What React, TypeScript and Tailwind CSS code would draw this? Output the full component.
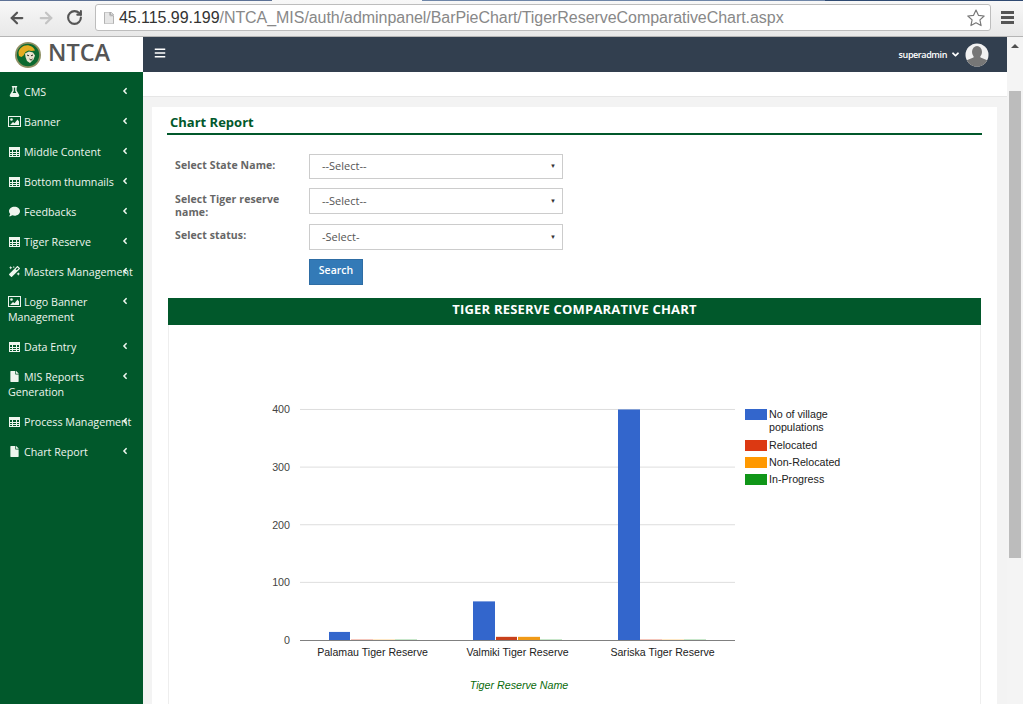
import { FaAngleDown, FaAngleLeft, FaBars, FaComment, FaFile, FaFlask, FaMagic } from 'react-icons/fa'
import { ArrowLeft, ArrowRight, RotateCw } from 'lucide-react'

function TableIcon({ className }: { className?: string }) {
  return (
    <svg className={className} width="11" height="10" viewBox="0 0 11 10">
      <rect x="0.5" y="0.5" width="10" height="9" fill="#01582b" stroke="#eef5ee" />
      <rect x="0" y="0" width="11" height="3" fill="#eef5ee" />
      <path d="M3.500 3v6M7.500 3v6M1 5.500h9M1 7.500h9" stroke="#eef5ee" strokeWidth="1" fill="none" />
    </svg>
  )
}

function ImageIcon({ className }: { className?: string }) {
  return (
    <svg className={className} width="13" height="11" viewBox="0 0 13 11">
      <rect x="0.5" y="0.5" width="12" height="10" fill="#01582b" stroke="#eef5ee" />
      <circle cx="3.500" cy="3.500" r="1.300" fill="#eef5ee" />
      <path d="M2 9l3-3 1.500 1.200L9.500 3.500 11 5.500V9z" fill="#eef5ee" />
    </svg>
  )
}

const menu = [
  { icon: FaFlask, label: 'CMS' },
  { icon: ImageIcon, label: 'Banner' },
  { icon: TableIcon, label: 'Middle Content' },
  { icon: TableIcon, label: 'Bottom thumnails' },
  { icon: FaComment, label: 'Feedbacks' },
  { icon: TableIcon, label: 'Tiger Reserve' },
  { icon: FaMagic, label: 'Masters Management' },
  { icon: ImageIcon, label: 'Logo Banner Management', wrap: true },
  { icon: TableIcon, label: 'Data Entry' },
  { icon: FaFile, label: 'MIS Reports Generation', wrap: true },
  { icon: TableIcon, label: 'Process Management' },
  { icon: FaFile, label: 'Chart Report' },
]

const filters = [
  { label: 'Select State Name:', value: '--Select--', row: 'h-[34px]', box: 'h-[25px]' },
  { label: 'Select Tiger reserve name:', value: '--Select--', row: 'h-[36px]', box: 'h-[26px]' },
  { label: 'Select status:', value: '-Select-', row: 'h-[35px]', box: 'h-[26px]' },
]

const bars = [
  { x: 329, w: 21, v: 14, c: '#3366cc' },
  { x: 351, w: 22, v: 0.5, c: '#dc3912' },
  { x: 373, w: 22, v: 0.4, c: '#ff9900' },
  { x: 395, w: 22, v: 0.4, c: '#109618' },
  { x: 473, w: 22, v: 67, c: '#3366cc' },
  { x: 496, w: 21, v: 5.5, c: '#c8401c' },
  { x: 518, w: 22, v: 5.5, c: '#f09a17' },
  { x: 540, w: 22, v: 0.4, c: '#109618' },
  { x: 618, w: 22, v: 400, c: '#3366cc' },
  { x: 640, w: 22, v: 0.5, c: '#dc3912' },
  { x: 662, w: 22, v: 0.4, c: '#ff9900' },
  { x: 684, w: 22, v: 0.4, c: '#109618' },
]

function Chart() {
  // svg coordinates follow the page, the panel starts at 169,325
  return (
    <svg width="811" height="380" viewBox="169 325 811 380" className="block" style={{ fontFamily: '"Liberation Sans", Arial, sans-serif' }}>
      {[0, 100, 200, 300, 400].map((t) => {
        const y = 640 - t * 0.5763
        return (
          <g key={t}>
            {t > 0 && <line x1="300" x2="735" y1={y} y2={y} stroke="#dedede" />}
            <text x="290" y={y + 4} textAnchor="end" fontSize="10.7" fill="#444">{t}</text>
          </g>
        )
      })}
      {bars.map((b) => (
        <rect key={b.x} x={b.x} y={640 - b.v * 0.5763} width={b.w} height={b.v * 0.5763} fill={b.c} />
      ))}
      <line x1="300" x2="735" y1="640.5" y2="640.5" stroke="#808080" />
      <g fontSize="10.6" fill="#222" textAnchor="middle">
        <text x="372.5" y="656">Palamau Tiger Reserve</text>
        <text x="517.5" y="656">Valmiki Tiger Reserve</text>
        <text x="662.5" y="656">Sariska Tiger Reserve</text>
      </g>
      <text x="519" y="689" textAnchor="middle" fontSize="10.7" fontStyle="italic" fill="#0a6b0a">Tiger Reserve Name</text>
      <rect x="745" y="409" width="22" height="11" fill="#3366cc" />
      <rect x="745" y="440" width="22" height="11" fill="#dc3912" />
      <rect x="745" y="457" width="22" height="11" fill="#ff9900" />
      <rect x="745" y="474" width="22" height="11" fill="#109618" />
      <g fontSize="10.7" fill="#222">
        <text x="769" y="418">No of village</text>
        <text x="769" y="431">populations</text>
        <text x="769" y="449">Relocated</text>
        <text x="769" y="466">Non-Relocated</text>
        <text x="769" y="483">In-Progress</text>
      </g>
    </svg>
  )
}

export default function App() {
  return (
    <div className="h-[704px] w-[1023px] overflow-hidden bg-white font-['Open_Sans',sans-serif]">
      {/* Browser toolbar */}
      <div className="flex h-[37px] flex-col border-b border-[#b5b5b5] bg-gradient-to-b from-[#f8f8f8] to-[#e8e8e8]">
        <div className="flex h-[1px] shrink-0">
          <span className="w-[272px] bg-[#5d7296]" />
          <span className="w-[150px]" />
          <span className="w-[403px] bg-[#6f86a8]" />
          <span className="flex-1 bg-[#2f4a72]" />
        </div>
        <div className="flex flex-1 items-center pb-[2px]">
          <div className="flex w-[95px] shrink-0 items-center gap-[11px] pl-[8px] text-[#555]">
            <ArrowLeft size={18} strokeWidth={3} />
            <ArrowRight size={18} strokeWidth={3} className="text-[#c4c4c4]" />
            <RotateCw size={17} strokeWidth={3} />
          </div>
          <div className="flex h-[27px] w-[896px] items-center rounded-[3px] border border-[#bdbdbd] bg-white pl-[7px] pr-[4px]">
            <FaFile className="mr-[4px] text-[#e6e6e6] stroke-[#999] stroke-[30]" size={12} />
            <span className="font-['Liberation_Sans',sans-serif] text-[16px] leading-none tracking-[-0.05px] text-[#333]">
              45.115.99.199<span className="text-[#888]">/NTCA_MIS/auth/adminpanel/BarPieChart/TigerReserveComparativeChart.aspx</span>
            </span>
            <svg className="ml-auto" width="20" height="20" viewBox="0 0 24 24" fill="#fff" stroke="#777" strokeWidth="1.4" strokeLinejoin="round">
              <path d="M12 2.5l2.9 6.3 6.9.8-5.1 4.7 1.4 6.8-6.1-3.4-6.1 3.4 1.4-6.8L2.2 9.6l6.9-.8z" />
            </svg>
          </div>
          <div className="ml-[10px] flex w-[13px] flex-col gap-[2px]">
            <span className="h-[3px] bg-[#555]" />
            <span className="h-[3px] bg-[#555]" />
            <span className="h-[3px] bg-[#555]" />
          </div>
        </div>
      </div>

      <div className="flex h-[667px]">
        <div className="flex w-[1007px] flex-col">
          {/* Top bar */}
          <div className="flex h-[35px] shrink-0">
            <div className="flex w-[143px] items-center bg-white pl-[15px]">
              <svg width="26" height="26" viewBox="0 0 26 26">
                <circle cx="13" cy="13" r="13" fill="#8f9064" />
                <circle cx="13" cy="13" r="11.2" fill="#0c6a30" />
                <path d="M3.500 11C4 6 9 2.500 14 3.500c3 .6 5 2.500 6 5l-3.500.5-3-.5-3 1.500-2 3.500-2 1.500-2.500-1z" fill="#e5ad22" />
                <path d="M10 11.500l4-2 4 1 2 3-1.500 4-3.500 3.500-3-2-1.500-4z" fill="#e9e4cf" />
                <path d="M12 13l2 .8M16 13.800l2-.8M14.500 17l1.500 1.200 1.500-1.200" stroke="#2a2a22" strokeWidth="1" fill="none" />
              </svg>
              <span className="ml-[7px] pb-[4px] text-[23.5px] font-semibold leading-none text-[#555]">NTCA</span>
            </div>
            <div className="flex flex-1 items-center bg-[#323f4f] pl-[11px] pr-[18px]">
              <FaBars className="mb-[4px] text-white" size={12} />
              <span className="ml-auto text-[9px] font-semibold tracking-[-0.4px] text-white">superadmin</span>
              <FaAngleDown className="ml-[3px] text-white" size={11} />
              <svg className="ml-[4px]" width="24" height="24" viewBox="0 0 24 24">
                <defs>
                  <clipPath id="avatar"><circle cx="12" cy="12" r="11.500" /></clipPath>
                </defs>
                <circle cx="12" cy="12" r="11.500" fill="#f2f2f2" />
                <g clipPath="url(#avatar)" fill="#777">
                  <ellipse cx="12" cy="9" rx="5" ry="6" />
                  <path d="M0 24v-5c2-3 6-3 9-5h6c3 2 7 2 9 5v5z" />
                </g>
              </svg>
            </div>
          </div>

          <div className="flex min-h-0 flex-1">
            {/* Sidebar */}
            <nav className="w-[143px] shrink-0 bg-[#01582b] pt-[4px] text-[10.7px] leading-[15px] text-[#eef5ee]">
              {menu.map((m) => (
                <div key={m.label} className={`relative whitespace-nowrap pl-[8px] pt-[9px] ${m.wrap ? 'h-[45px]' : 'h-[30px]'}`}>
                  <span className="mr-[3px] inline-flex w-[13px] justify-center align-[-1px]">
                    <m.icon size={11} className="block" />
                  </span>
                  {m.wrap ? (
                    <>
                      {m.label.split(' ').slice(0, -1).join(' ')}
                      <br />
                      {m.label.split(' ').slice(-1)[0]}
                    </>
                  ) : (
                    m.label
                  )}
                  <FaAngleLeft className="absolute left-[120px] top-[10px]" size={10} />
                </div>
              ))}
            </nav>

            {/* Main */}
            <main className="flex-1 bg-[#f3f3f3]">
              <div className="h-[25px] border-b border-[#e6e6e6] bg-white" />
              <div className="ml-[9px] mr-[10px] mt-[10px] h-[700px] bg-white pl-[15px] pr-[15px] pt-[6px]">
                <h2 className="border-b-2 border-[#01582b] pb-[2px] pl-[3px] text-[13px] font-bold leading-[18px] text-[#01582b]">Chart Report</h2>
                <div className="pt-[19px]">
                  {filters.map((f) => (
                    <div key={f.label} className={`flex ${f.row}`}>
                      <label className="w-[142px] pl-[8px] pr-[12px] pt-[5px] text-[10.5px] font-bold leading-[13px] tracking-[0.1px] text-[#666]">{f.label}</label>
                      <div className={`flex w-[254px] items-center border border-[#ccc] pl-[12px] text-[11px] text-[#555] ${f.box}`}>
                        {f.value}
                        <span className="ml-auto mr-[6px] text-[6px] text-[#333]">▼</span>
                      </div>
                    </div>
                  ))}
                </div>
                <div className="pl-[142px]">
                  <button className="block h-[26px] w-[54px] border border-[#2e6da4] bg-[#337ab7] pb-[2px] text-[10.5px] font-semibold text-white">Search</button>
                </div>
                <div className="ml-[1px] mt-[13px] w-[813px] border-x border-[#eee]">
                  <div className="-mx-[1px] flex h-[27px] items-center justify-center bg-[#01582b] pb-[3px] text-[13px] font-bold tracking-[0.2px] text-white">TIGER RESERVE COMPARATIVE CHART</div>
                  <Chart />
                </div>
              </div>
            </main>
          </div>
        </div>

        {/* Page scrollbar */}
        <div className="w-[16px] shrink-0 bg-[#f4f4f4] px-[2px]">
          <div className="mx-auto mt-[7px] h-0 w-0 border-x-[4px] border-b-[4px] border-x-transparent border-b-[#505050]" />
          <div className="mt-[43px] h-[467px] w-[12px] bg-[#bcbcbc]" />
        </div>
      </div>
    </div>
  )
}
